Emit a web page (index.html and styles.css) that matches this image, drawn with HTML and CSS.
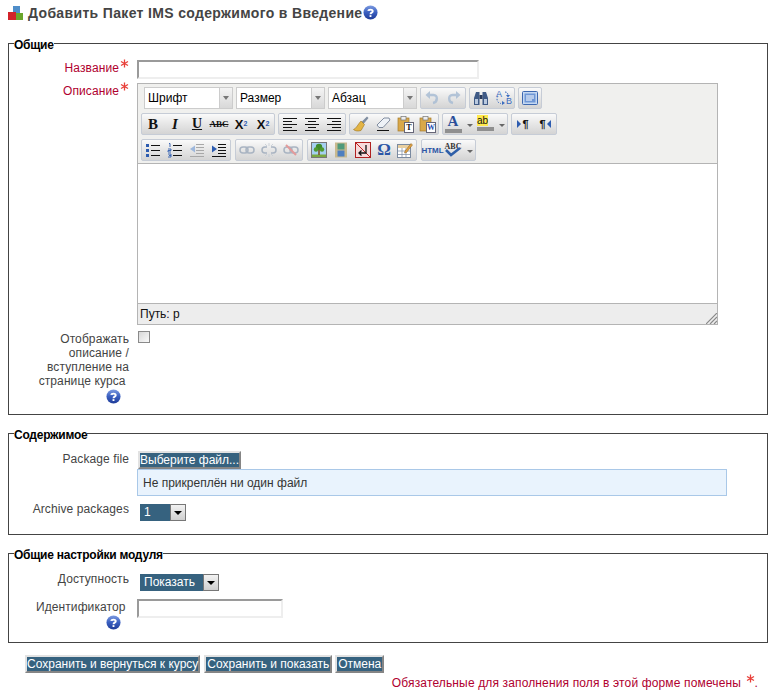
FILE: index.html
```html
<!DOCTYPE html>
<html lang="ru">
<head>
    <meta charset="UTF-8">
    <title>Добавить Пакет IMS содержимого</title>
    <link rel="stylesheet" href="styles.css">
</head>
<body>
    <svg class="defs" width="0" height="0">
        <defs>
            <linearGradient id="helpfill" x1="0" y1="0" x2="0" y2="1">
                <stop offset="0" stop-color="#7d9be0"/>
                <stop offset="0.5" stop-color="#3a5fc0"/>
                <stop offset="1" stop-color="#1f3c98"/>
            </linearGradient>
            <symbol id="help" viewBox="0 0 16 16">
                <circle cx="8" cy="8" r="7.5" fill="url(#helpfill)"/>
                <path d="M5.6 6.2C5.8 4.6 10.4 4.2 10.4 6.6 10.4 8.2 8 8 8 9.8" fill="none" stroke="#fff" stroke-width="2"/>
                <rect x="7" y="10.8" width="2" height="2" fill="#fff"/>
            </symbol>
            <symbol id="star" viewBox="0 0 9 9">
                <path d="M4.5 0.5V8.5M1 2.5L8 6.5M8 2.5L1 6.5" stroke="#e8403a" stroke-width="1.3"/>
            </symbol>
            <symbol id="undo" viewBox="0 0 16 16">
                <path d="M5 5H9.5C14 5 14 12 9 13" fill="none" stroke="#a9bdd4" stroke-width="2.4"/>
                <path d="M6 1V9L1.500 5Z" fill="#a9bdd4"/>
            </symbol>
            <symbol id="find" viewBox="0 0 16 16">
                <path d="M1 15V8L3 2H6.500V15ZM15 15V8L13 2H9.500V15Z" fill="#3f5a86"/>
                <rect x="6.500" y="5" width="3" height="4" fill="#28395a"/>
                <path d="M2 9H5V14H2ZM11 9H14V14H11Z" fill="#b9c9df"/>
            </symbol>
            <symbol id="replace" viewBox="0 0 16 16">
                <path d="M3 6C1 9 2 13 6 13.500M10 2C12 2 13 3 13 6" fill="none" stroke="#3a6cc0" stroke-dasharray="1.500 1.500"/>
                <path d="M7 11V15L10 13ZM11 5H15L13 7.500Z" fill="#3a6cc0"/>
            </symbol>
            <symbol id="screen" viewBox="0 0 16 16">
                <rect x="0.500" y="1.500" width="15" height="13" rx="1" fill="#c5d8f2" stroke="#3d68b0"/>
                <rect x="2.500" y="3.500" width="11" height="9" fill="#6f97d6"/>
                <path d="M4 6H12M4 8H12M4 10H10" stroke="#fff"/>
            </symbol>
            <symbol id="left" viewBox="0 0 16 16">
                <path d="M1 2.500H15M1 5.500H10M1 8.500H15M1 11.500H10M1 14.500H15" stroke="#111"/>
            </symbol>
            <symbol id="center" viewBox="0 0 16 16">
                <path d="M1 2.500H15M4 5.500H12M1 8.500H15M4 11.500H12M1 14.500H15" stroke="#111"/>
            </symbol>
            <symbol id="right" viewBox="0 0 16 16">
                <path d="M1 2.500H15M6 5.500H15M1 8.500H15M6 11.500H15M1 14.500H15" stroke="#111"/>
            </symbol>
            <symbol id="brush" viewBox="0 0 16 16">
                <path d="M8.500 6L14 0.500 15.500 2 10.500 8Z" fill="#7f8da0"/>
                <path d="M8 5L11.500 8.500 8 14.500C5 15.500 2 15 0.500 13.500 3.500 12.500 5 8 8 5Z" fill="#e3b444" stroke="#9a7420" stroke-width="0.6"/>
            </symbol>
            <symbol id="eraser" viewBox="0 0 16 16">
                <path d="M2 9L9 2H14L15 4 8 11.500H4Z" fill="#eef2f7" stroke="#66748a" stroke-width="0.8"/>
                <path d="M2 14.500H14" stroke="#111"/>
            </symbol>
            <symbol id="clip" viewBox="0 0 16 16">
                <rect x="1" y="2" width="11" height="13" fill="#d9a84a" stroke="#a57c2c" stroke-width="0.7"/>
                <rect x="4" y="0.500" width="5" height="3.500" fill="#eee" stroke="#777" stroke-width="0.7"/>
            </symbol>
            <symbol id="bullets" viewBox="0 0 16 16">
                <path d="M6 3.500H15M6 8.500H15M6 13.500H15" stroke="#111"/>
                <path d="M1 2H4V5H1ZM1 7H4V10H1ZM1 12H4V15H1Z" fill="#2d5cb0"/>
            </symbol>
            <symbol id="numbers" viewBox="0 0 16 16">
                <path d="M6 3.500H15M6 8.500H15M6 13.500H15" stroke="#111"/>
                <path d="M2 1.500H3V5M1 7H4V8.500H1V10H4M1 12H4V15H1M2 13.500H4" fill="none" stroke="#2d5cb0" stroke-width="0.9"/>
            </symbol>
            <symbol id="outdent" viewBox="0 0 16 16">
                <path d="M7 2.500H15M7 5.500H15M7 8.500H15M7 11.500H15M1 14.500H15" stroke="#a8a8a8"/>
                <path d="M1 7L6 3.500V10.500Z" fill="#9db7dc"/>
            </symbol>
            <symbol id="indent" viewBox="0 0 16 16">
                <path d="M7 2.500H15M7 5.500H15M7 8.500H15M7 11.500H15M1 14.500H15" stroke="#111"/>
                <path d="M6 7L1 3.500V10.500Z" fill="#2d5cb0"/>
            </symbol>
            <symbol id="link" viewBox="0 0 16 16">
                <rect x="1" y="5" width="8" height="6" rx="3" fill="none" stroke="#a9b4c2" stroke-width="1.500"/>
                <rect x="7" y="5" width="8" height="6" rx="3" fill="none" stroke="#a9b4c2" stroke-width="1.500"/>
            </symbol>
            <symbol id="unlink" viewBox="0 0 16 16">
                <path d="M6 5H4A3 3 0 0 0 4 11H6M10 5H12A3 3 0 0 1 12 11H10" fill="none" stroke="#a9b4c2" stroke-width="1.500"/>
                <path d="M8 1V4M8 12V15M4 2L6 4M12 2L10 4M4 14L6 12M12 14L10 12" stroke="#c3cad3" stroke-width="0.8"/>
            </symbol>
            <symbol id="anchor" viewBox="0 0 16 16">
                <rect x="1" y="5" width="8" height="6" rx="3" fill="none" stroke="#a9b4c2" stroke-width="1.500"/>
                <rect x="7" y="5" width="8" height="6" rx="3" fill="none" stroke="#a9b4c2" stroke-width="1.500"/>
                <path d="M3 3L13 13" stroke="#e39a9a" stroke-width="2"/>
            </symbol>
            <symbol id="tree" viewBox="0 0 16 16">
                <rect x="0.500" y="0.500" width="15" height="15" fill="#a6d0f0" stroke="#777"/>
                <path d="M1 12.500H15V15H1Z" fill="#7aa83f"/>
                <circle cx="8" cy="5" r="3.200" fill="#3f8a2a"/>
                <circle cx="5" cy="7.500" r="2.200" fill="#4f9a2f"/>
                <circle cx="11" cy="7.500" r="2.200" fill="#4f9a2f"/>
                <path d="M7.200 8H8.800V13H7.200Z" fill="#7a5426"/>
            </symbol>
            <symbol id="media" viewBox="0 0 16 16">
                <rect x="2" y="0.500" width="12" height="15" fill="#c9b98e"/>
                <path d="M4.500 1.500H11.500V7.500H4.500Z" fill="#4f9a7a"/>
                <path d="M4.500 8.500H11.500V14.500H4.500Z" fill="#4f7fc0"/>
            </symbol>
            <symbol id="nbsp" viewBox="0 0 16 16">
                <rect x="0.500" y="0.500" width="15" height="15" fill="#f7dada" stroke="#b02020"/>
                <path d="M1 1L15 15" stroke="#c02020"/>
                <path d="M11 3V11H4M6.500 8.500L4 11 6.500 13.500" fill="none" stroke="#111" stroke-width="1.300"/>
            </symbol>
            <symbol id="table" viewBox="0 0 16 16">
                <rect x="0.500" y="2.500" width="13" height="13" fill="#fff" stroke="#7a8aa0"/>
                <path d="M1 3H13V6H1Z" fill="#e8cfa0"/>
                <path d="M1 9H13M1 12.500H13M5 6V15M9 6V15" stroke="#7a8aa0" stroke-width="0.700"/>
                <path d="M8 9L14 1.500 15.500 3 9.500 10.500 7.500 11Z" fill="#e0a040" stroke="#8a6020" stroke-width="0.500"/>
            </symbol>
        </defs>
    </svg>

    <h2 class="page-title">
        <svg class="mod-icon" width="16" height="16" viewBox="0 0 16 16">
            <rect x="5" y="1" width="7" height="7" fill="#4f8ec9"/>
            <rect x="0" y="7" width="8" height="8" fill="#d2232a"/>
            <rect x="8" y="8" width="7" height="7" fill="#6aa62c"/>
        </svg>
        <span>Добавить Пакет IMS содержимого в Введение</span><svg class="help" width="15" height="15"><use href="#help"/></svg>
    </h2>

    <form>
        <fieldset class="group group-general">
            <legend>Общие</legend>

            <div class="row row-name">
                <label class="lbl required">Название<svg class="star" width="9" height="9"><use href="#star"/></svg></label>
                <div><input type="text" class="field field-name"></div>
            </div>

            <div class="row row-editor">
                <label class="lbl required">Описание<svg class="star" width="9" height="9"><use href="#star"/></svg></label>
                <div class="editor">
                    <div class="toolbar">
                        <div class="tb-row">
                            <span class="combo"><span>Шрифт</span><i></i></span>
                            <span class="combo"><span>Размер</span><i></i></span>
                            <span class="combo"><span>Абзац</span><i></i></span>
                            <div class="tb-group">
                                <span class="tb off"><svg width="16" height="16"><use href="#undo"/></svg></span>
                                <span class="tb off"><svg class="flip" width="16" height="16"><use href="#undo"/></svg></span>
                            </div>
                            <div class="tb-group">
                                <span class="tb"><svg width="16" height="16"><use href="#find"/></svg></span>
                                <span class="tb ab-swap"><svg width="16" height="16"><use href="#replace"/></svg><em class="a">A</em><em class="b">B</em></span>
                            </div>
                            <div class="tb-group">
                                <span class="tb"><svg width="16" height="16"><use href="#screen"/></svg></span>
                            </div>
                        </div>

                        <div class="tb-row">
                            <div class="tb-group">
                                <span class="tb t-b">B</span>
                                <span class="tb t-i">I</span>
                                <span class="tb t-u">U</span>
                                <span class="tb t-s">ABC</span>
                                <span class="tb t-x">X<sub>2</sub></span>
                                <span class="tb t-x">X<sup>2</sup></span>
                            </div>
                            <div class="tb-group">
                                <span class="tb"><svg width="16" height="16"><use href="#left"/></svg></span>
                                <span class="tb"><svg width="16" height="16"><use href="#center"/></svg></span>
                                <span class="tb"><svg width="16" height="16"><use href="#right"/></svg></span>
                            </div>
                            <div class="tb-group">
                                <span class="tb"><svg width="16" height="16"><use href="#brush"/></svg></span>
                                <span class="tb"><svg width="16" height="16"><use href="#eraser"/></svg></span>
                                <span class="tb paste"><svg width="16" height="16"><use href="#clip"/></svg><em class="p-t">T</em></span>
                                <span class="tb paste"><svg width="16" height="16"><use href="#clip"/></svg><em class="p-w">W</em></span>
                            </div>
                            <div class="tb-group">
                                <span class="tb color"><em class="c-a">A</em><b class="bar"></b></span>
                                <span class="drop"></span>
                                <span class="tb color"><em class="c-ab">ab</em><b class="bar"></b></span>
                                <span class="drop"></span>
                            </div>
                            <div class="tb-group">
                                <span class="tb pil"><b class="tri-r"></b>¶</span>
                                <span class="tb pil">¶<b class="tri-l"></b></span>
                            </div>
                        </div>

                        <div class="tb-row tb-row-wide">
                            <div class="tb-group">
                                <span class="tb"><svg width="16" height="16"><use href="#bullets"/></svg></span>
                                <span class="tb"><svg width="16" height="16"><use href="#numbers"/></svg></span>
                                <span class="tb"><svg width="16" height="16"><use href="#outdent"/></svg></span>
                                <span class="tb"><svg width="16" height="16"><use href="#indent"/></svg></span>
                            </div>
                            <div class="tb-group">
                                <span class="tb"><svg width="16" height="16"><use href="#link"/></svg></span>
                                <span class="tb"><svg width="16" height="16"><use href="#unlink"/></svg></span>
                                <span class="tb"><svg width="16" height="16"><use href="#anchor"/></svg></span>
                            </div>
                            <div class="tb-group">
                                <span class="tb"><svg width="16" height="16"><use href="#tree"/></svg></span>
                                <span class="tb"><svg width="16" height="16"><use href="#media"/></svg></span>
                                <span class="tb"><svg width="16" height="16"><use href="#nbsp"/></svg></span>
                                <span class="tb t-om">Ω</span>
                                <span class="tb"><svg width="16" height="16"><use href="#table"/></svg></span>
                            </div>
                            <div class="tb-group">
                                <span class="tb t-html">HTML</span>
                                <span class="tb spell"><em>ABC</em><svg width="18" height="10" viewBox="0 0 18 10"><path d="M2 3L7 8 16 1" fill="none" stroke="#2f5fa8" stroke-width="2.500"/></svg></span>
                                <span class="drop"></span>
                            </div>
                        </div>
                    </div>
                    <div class="edit-area"></div>
                    <div class="path-bar">Путь: p
                        <svg class="grip" width="11" height="11" viewBox="0 0 11 11"><path d="M0 11L11 0M4 11L11 4M8 11L11 8" stroke="#888" stroke-width="1.200"/></svg>
                    </div>
                </div>
            </div>

            <div class="row row-check">
                <label class="lbl">Отображать описание / вступление на странице курса&nbsp;<svg class="help help-under" width="15" height="15"><use href="#help"/></svg></label>
                <div><input type="checkbox" class="check"></div>
            </div>
        </fieldset>

        <fieldset class="group group-content">
            <legend>Содержимое</legend>
            <div class="row row-package">
                <label class="lbl">Package file</label>
                <div>
                    <button type="button" class="btn btn-file">Выберите файл...</button>
                    <div class="file-info">Не прикреплён ни один файл</div>
                </div>
            </div>
            <div class="row row-archive">
                <label class="lbl">Archive packages</label>
                <div><span class="pick pick-one"><span>1</span><i></i></span></div>
            </div>
        </fieldset>

        <fieldset class="group group-module">
            <legend>Общие настройки модуля</legend>
            <div class="row row-visible">
                <label class="lbl">Доступность</label>
                <div><span class="pick pick-show"><span>Показать</span><i></i></span></div>
            </div>
            <div class="row row-idnum">
                <label class="lbl">Идентификатор&nbsp;<svg class="help help-under" width="15" height="15"><use href="#help"/></svg></label>
                <div><input type="text" class="field field-id"></div>
            </div>
        </fieldset>

        <div class="actions">
            <button type="button" class="btn">Сохранить и вернуться к курсу</button>
            <button type="button" class="btn btn-wide">Сохранить и показать</button>
            <button type="button" class="btn btn-wide">Отмена</button>
        </div>
        <p class="req-note">Обязательные для заполнения поля в этой форме помечены <svg class="star" width="9" height="9"><use href="#star"/></svg>.</p>
    </form>
</body>
</html>
```

FILE: styles.css
```css
* {
    box-sizing: border-box;
}

html, body {
    height: 692px;
    overflow: hidden;
}

body {
    margin: 0;
    padding: 0 4px 0 8px;
    background: #fff;
    color: #444;
    font-family: "Liberation Sans", Arial, sans-serif;
    font-size: 12px;
}

.defs {
    position: absolute;
}

.page-title {
    display: flex;
    align-items: center;
    margin: 0 0 11px;
    padding-top: 2px;
    height: 23px;
    color: #444;
    font-size: 14px;
    font-weight: bold;
    letter-spacing: 0.34px;
}

.mod-icon {
    margin-right: 4px;
}

.group {
    margin: 0 0 9px;
    padding: 0;
    border: 1px solid #444;
    min-width: 0;
}

.group legend {
    margin-left: 5px;
    padding: 4px 0 0;
    color: #000;
    font-size: 12px;
    font-weight: bold;
    line-height: 14px;
    letter-spacing: -0.25px;
}

.group-general {
    height: 381px;
}

.group-content {
    height: 111px;
}

.group-module {
    height: 99px;
    margin-bottom: 12px;
}

.row {
    display: grid;
    grid-template-columns: 120px 1fr;
    column-gap: 8px;
}

.lbl {
    text-align: right;
    line-height: 14px;
    letter-spacing: 0.1px;
}

.required {
    margin-top: -1px;
    color: #b0002f;
}

.star {
    vertical-align: 4px;
    margin-left: 1px;
}

.help-under {
    display: block;
    margin: 1px 8px 0 auto;
}

.row-name {
    margin-top: 8px;
}

.field {
    display: block;
    height: 19px;
    margin: 0;
    padding: 0;
    background: #fff;
    border: 2px solid;
    border-color: #9a9a9a #eee #eee #9a9a9a;
    outline: none;
}

.field-name {
    width: 342px;
}

.field-id {
    width: 146px;
}

.row-editor {
    margin-top: 4px;
}

.editor {
    width: 581px;
    height: 242px;
    display: flex;
    flex-direction: column;
    border: 1px solid #b4b4b4;
    background: #f0f0ee;
}

.toolbar {
    height: 80px;
    padding: 1px 0 0 3px;
    border-bottom: 1px solid #b4b4b4;
}

.tb-row {
    display: flex;
    align-items: center;
    gap: 3px;
    height: 26px;
}

.tb-row-wide {
    gap: 4px;
}

.tb-row:first-child .combo:first-child {
    margin-left: 3px;
}

.combo {
    display: flex;
    justify-content: space-between;
    width: 89px;
    height: 22px;
    background: #fff;
    border: 1px solid #ccc;
    color: #000;
    font-size: 12px;
    line-height: 20px;
    padding-left: 3px;
}

.combo i {
    position: relative;
    width: 13px;
    background: linear-gradient(#f4f4f4, #d8d8d8);
    border-left: 1px solid #ccc;
}

.combo i::after {
    content: "";
    position: absolute;
    left: 3px;
    top: 8px;
    border: 3px solid transparent;
    border-top: 4px solid #777;
    border-bottom: 0;
}

.tb-group {
    display: flex;
    align-items: center;
    height: 22px;
    border: 1px solid #c6ccd6;
    border-radius: 2px;
    background: linear-gradient(#fafafa 0%, #e6e6e6 50%, #d4d4d4 100%);
}

.tb {
    position: relative;
    display: flex;
    align-items: center;
    justify-content: center;
    width: 22px;
    height: 20px;
    color: #111;
}

.tb em {
    font-style: normal;
}

.off {
    opacity: 0.85;
}

.flip {
    transform: scaleX(-1);
}

.ab-swap em {
    position: absolute;
    color: #3a6cc0;
    font-size: 9px;
    line-height: 9px;
}

.ab-swap .a {
    left: 4px;
    top: 2px;
}

.ab-swap .b {
    right: 2px;
    bottom: 2px;
}

.t-b {
    font: bold 15px "Liberation Serif", serif;
}

.t-i {
    font: italic bold 15px "Liberation Serif", serif;
}

.t-u {
    font: bold 14px "Liberation Serif", serif;
    text-decoration: underline;
}

.t-s {
    font: bold 9px "Liberation Serif", serif;
    text-decoration: line-through;
}

.t-x {
    font: bold 13px "Liberation Sans", sans-serif;
}

.t-x sub, .t-x sup {
    color: #2d5cb0;
    font-size: 7px;
    line-height: 0;
}

.paste em {
    position: absolute;
    right: 2px;
    bottom: 1px;
    width: 10px;
    height: 11px;
    background: #fff;
    border: 1px solid #667;
    font: bold 8px/9px "Liberation Serif", serif;
    text-align: center;
}

.p-w {
    color: #1f4fb0;
}

.color {
    flex-direction: column;
    width: 20px;
    justify-content: flex-start;
}

.c-a {
    color: #2b4f9a;
    font: bold 15px/13px "Liberation Serif", serif;
    margin-top: 1px;
}

.c-ab {
    background: #ffe94d;
    color: #111;
    font-size: 10px;
    line-height: 11px;
    margin: 1px 5px 0 0;
}

.bar {
    width: 17px;
    height: 4px;
    margin-top: 1px;
    background: #8f8f8f;
}

.drop {
    width: 0;
    height: 0;
    margin: 2px 2px 0 4px;
    border: 3px solid transparent;
    border-top: 3px solid #666;
    border-bottom: 0;
}

.pil {
    gap: 1px;
    font: bold 11px "Liberation Sans", sans-serif;
}

.tri-r {
    border: 4px solid transparent;
    border-left: 4px solid #2d5cb0;
    border-right: 0;
}

.tri-l {
    border: 4px solid transparent;
    border-right: 4px solid #2d5cb0;
    border-left: 0;
}

.t-om {
    width: 20px;
    color: #2b55a5;
    font: bold 17px "Liberation Serif", serif;
}

.t-html {
    color: #2b55a5;
    font: bold 8px "Liberation Sans", sans-serif;
    width: 21px;
}

.spell {
    flex-direction: column;
    width: 20px;
}

.spell em {
    color: #333;
    font: bold 8px/7px "Liberation Serif", serif;
}

.spell svg {
    margin-top: -3px;
}

.edit-area {
    flex: 1;
    background: #fff;
}

.path-bar {
    position: relative;
    height: 21px;
    padding-left: 2px;
    border-top: 1px solid #b4b4b4;
    background: #ededed;
    color: #111;
    font-size: 12px;
    line-height: 20px;
}

.grip {
    position: absolute;
    right: 0;
    bottom: 0;
}

.row-check {
    margin-top: 6px;
}

.row-check .lbl {
    padding-top: 1px;
}

.check {
    appearance: none;
    display: block;
    width: 12px;
    height: 12px;
    margin: 0 0 0 1px;
    border: 1px solid #8a8a8a;
    background: linear-gradient(135deg, #d8d8d8, #fafafa);
}

.row-package {
    margin-top: 9px;
}

.row-package .lbl {
    padding-top: 1px;
}

.btn {
    display: block;
    height: 18px;
    margin: 0;
    padding: 0;
    background: #36627f;
    border: 2px solid;
    border-color: #e2e2e2 #858585 #858585 #e2e2e2;
    color: #fff;
    font-family: "Liberation Sans", Arial, sans-serif;
    font-size: 12px;
    line-height: 14px;
    white-space: nowrap;
}

.btn-wide {
    padding: 0 1px;
}

.btn-file {
    width: 103px;
    margin-left: 1px;
}

.file-info {
    width: 590px;
    height: 27px;
    padding-left: 5px;
    border: 1px solid #a9c8e8;
    background: #e9f3fd;
    color: #333;
    line-height: 27px;
}

.row-archive {
    margin-top: 6px;
}

.pick {
    display: flex;
    height: 17px;
    margin: 2px 0 0 3px;
    background: #36627f;
    color: #fff;
    font-size: 12px;
    line-height: 17px;
}

.pick span {
    flex: 1;
    padding-left: 4px;
}

.pick i {
    position: relative;
    width: 16px;
    background: linear-gradient(#f2f2f2, #cfcfcf);
    border: 1px solid #777;
}

.pick i::after {
    content: "";
    position: absolute;
    left: 3px;
    top: 6px;
    border: 4px solid transparent;
    border-top: 4px solid #000;
    border-bottom: 0;
}

.pick-one {
    width: 46px;
}

.pick-show {
    width: 79px;
}

.row-visible {
    margin-top: 10px;
}

.row-idnum {
    margin-top: 8px;
}

.row-idnum .lbl {
    padding-top: 1px;
}

.actions {
    display: flex;
    gap: 3px;
    padding-left: 17px;
}

.actions .btn:nth-child(2) {
    margin-left: 1px;
}

.req-note {
    margin: 1px 10px 0 0;
    color: #b0002f;
    letter-spacing: 0.14px;
    line-height: 14px;
    text-align: right;
}
```
